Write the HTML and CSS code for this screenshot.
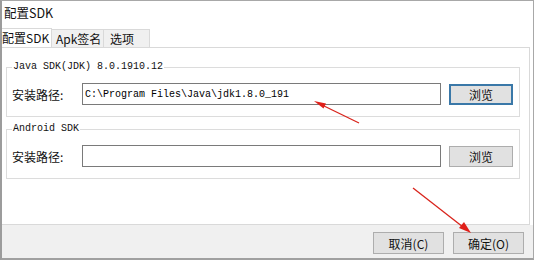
FILE: index.html
```html
<!DOCTYPE html>
<html>
<head>
    <title>配置SDK</title>
    <link rel="stylesheet" href="styles.css">
</head>
<body>
    <div class="window">
        <div class="titlebar">配置SDK</div>

        <div class="tabs">
            <div class="tab active">配置SDK</div>
            <div class="tab">Apk签名</div>
            <div class="tab last">选项</div>
        </div>

        <div class="panel">
            <fieldset class="group">
                <legend>Java SDK(JDK) 8.0.1910.12</legend>
                <div class="row">
                    <label>安装路径:</label>
                    <input type="text" class="path" value="C:\Program Files\Java\jdk1.8.0_191">
                    <button class="btn focus">浏览</button>
                </div>
            </fieldset>

            <fieldset class="group second">
                <legend>Android SDK</legend>
                <div class="row">
                    <label>安装路径:</label>
                    <input type="text" class="path" value="">
                    <button class="btn">浏览</button>
                </div>
            </fieldset>
        </div>

        <div class="footer">
            <button class="btn wide">取消(C)</button>
            <button class="btn wide">确定(O)</button>
        </div>

        <svg class="arrows" width="536" height="260" viewBox="0 0 536 260">
            <line x1="359" y1="123" x2="322" y2="105" stroke="#d9241c" stroke-width="1.3"/>
            <polygon points="314,101 326,103.5 323.5,108.5" fill="#e0201a"/>
            <line x1="413" y1="188" x2="463" y2="227" stroke="#d9241c" stroke-width="1.3"/>
            <polygon points="471,233 459,228 464,222" fill="#e0201a"/>
        </svg>
    </div>
</body>
</html>
```

FILE: styles.css
```css
body {
    margin: 0;
    font-family: "Noto Sans CJK SC", "Liberation Sans", sans-serif;
    font-size: 12px;
    color: #000;
    background: #fff;
}
.window {
    position: relative;
    width: 534px;
    height: 260px;
    box-sizing: border-box;
    border-top: 1px solid #a8a8a8;
    border-left: 2px solid #9c9c9c;
    border-right: 1px solid #a8a8a8;
    border-bottom: 2px solid #a0a0a0;
    background: #fff;
    display: flex;
    flex-direction: column;
}
.titlebar {
    height: 28px;
    line-height: 23px;
    padding-left: 2px;
    font-size: 12.5px;
    color: #111;
}
.tabs {
    display: flex;
    height: 18px;
    background: #fff;
}
.tab {
    width: 52px;
    height: 18px;
    line-height: 17px;
    padding: 0 0 0 4px;
    box-sizing: border-box;
    border: 1px solid #d9d9d9;
    border-bottom: none;
    border-left: none;
    background: #f0f0f0;
    color: #111;
}
.tab.active {
    width: 50px;
    background: #fff;
    height: 19px;
    margin-top: -1px;
    padding: 0;
}
.tab.last {
    width: 46px;
    padding-left: 6px;
}
.panel {
    height: 178px;
    box-sizing: border-box;
    margin-right: 3px;
    border: 1px solid #d9d9d9;
    border-left: none;
    background: #fff;
    padding: 13px 9px 0 4px;
}
.group {
    margin: 0;
    padding: 10px 6px 11px 5px;
    border: 1px solid #dcdcdc;
}
.group.second {
    margin-top: 6px;
}
.group legend {
    padding: 0 1px;
    font-family: "Liberation Mono", "DejaVu Sans Mono", monospace;
    font-size: 10px;
    line-height: 12px;
    color: #111;
}
.row {
    display: flex;
    align-items: center;
}
.row label {
    width: 70px;
    color: #111;
}
.path {
    width: 359px;
    height: 22px;
    box-sizing: border-box;
    margin: 0;
    padding: 0 2px;
    border: 1px solid #7a7a7a;
    font-family: "Liberation Mono", "DejaVu Sans Mono", monospace;
    font-size: 10px;
    color: #000;
    outline: none;
}
.btn {
    margin: 0 0 0 8px;
    width: 64px;
    height: 21px;
    box-sizing: border-box;
    padding: 0;
    border: 1px solid #adadad;
    background: #e1e1e1;
    font-family: "Noto Sans CJK SC", "Liberation Sans", sans-serif;
    font-size: 12px;
    color: #111;
}
.btn.focus {
    border: 2px solid #3a78a8;
}
.footer {
    flex: 1;
    background: #f0f0f0;
    display: flex;
    justify-content: flex-end;
    align-items: flex-start;
    padding: 7px 9px 0 0;
    gap: 9px;
}
.btn.wide {
    margin: 0;
    width: 71px;
    height: 22px;
}
.arrows {
    position: absolute;
    left: -2px;
    top: -1px;
    pointer-events: none;
}
```
